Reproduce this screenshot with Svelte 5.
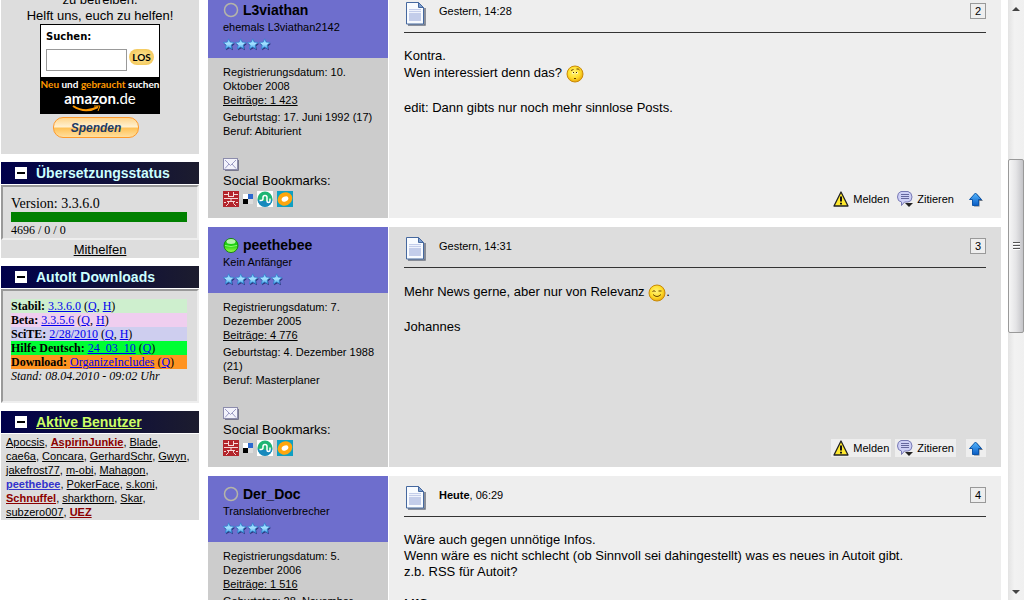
<script lang="ts">
	type User = { name: string; group?: 'admin' | 'mod' };
	type Post = {
		nr: number;
		author: string;
		online?: boolean;
		rank: string;
		stars: number;
		registered: string;
		posts: string;
		birthday: string;
		job?: string;
		day: string;
		time: string;
		today?: boolean;
	};

	const downloads = [
		{ label: 'Stabil', link: '3.3.6.0', extra: ['Q', 'H'], color: 'stable' },
		{ label: 'Beta', link: '3.3.5.6', extra: ['Q', 'H'], color: 'beta' },
		{ label: 'SciTE', link: '2/28/2010', extra: ['Q', 'H'], color: 'scite' },
		{ label: 'Hilfe Deutsch', link: '24_03_10', extra: ['Q'], color: 'german' },
		{ label: 'Download', link: 'OrganizeIncludes', extra: ['Q'], color: 'organize' }
	];

	const users: User[] = [
		{ name: 'Apocsis' },
		{ name: 'AspirinJunkie', group: 'admin' },
		{ name: 'Blade' },
		{ name: 'cae6a' },
		{ name: 'Concara' },
		{ name: 'GerhardSchr' },
		{ name: 'Gwyn' },
		{ name: 'jakefrost77' },
		{ name: 'm-obi' },
		{ name: 'Mahagon' },
		{ name: 'peethebee', group: 'mod' },
		{ name: 'PokerFace' },
		{ name: 's.koni' },
		{ name: 'Schnuffel', group: 'admin' },
		{ name: 'sharkthorn' },
		{ name: 'Skar' },
		{ name: 'subzero007' },
		{ name: 'UEZ', group: 'admin' }
	];

	const posts: Post[] = [
		{
			nr: 2,
			author: 'L3viathan',
			rank: 'ehemals L3viathan2142',
			stars: 4,
			registered: '10. Oktober 2008',
			posts: '1 423',
			birthday: '17. Juni 1992 (17)',
			job: 'Abiturient',
			day: 'Gestern',
			time: '14:28'
		},
		{
			nr: 3,
			author: 'peethebee',
			online: true,
			rank: 'Kein Anfänger',
			stars: 5,
			registered: '7. Dezember 2005',
			posts: '4 776',
			birthday: '4. Dezember 1988 (21)',
			job: 'Masterplaner',
			day: 'Gestern',
			time: '14:31'
		},
		{
			nr: 4,
			author: 'Der_Doc',
			rank: 'Translationverbrecher',
			stars: 4,
			registered: '5. Dezember 2006',
			posts: '1 516',
			birthday: '28. November 1989 (20)',
			day: 'Heute',
			time: '06:29',
			today: true
		}
	];
</script>

{#snippet boxTitle(title: string, linked = false)}
	<h2>
		<button class="collapse" aria-label="{title} einklappen"></button>
		{#if linked}<a href="#users">{title}</a>{:else}{title}{/if}
	</h2>
{/snippet}

{#snippet smiley(kind: string)}
	<svg class="smiley" width="18" height="18" viewBox="0 0 18 18" role="img" aria-label={kind}>
		<circle cx="9" cy="9" r="8" fill="url(#face)" stroke="#c98a08" />
		{#if kind === 'wink'}
			<path d="M4.500 7.500q1.500-1.500 3 0M10.500 7h3M5 10.500q4 4 8 0" fill="none" stroke="#6b4300" />
		{:else}
			<path d="M5 5.500l2.500-1M10.500 4q2-.5 3 1M8 13.500h2" fill="none" stroke="#6b4300" />
			<path d="M6 7h2v2H6zM10 7h2v2h-2z" fill="#fff6b0" />
			<path d="M7 7.500h1M10 7.500h1" stroke="#3c2800" />
		{/if}
	</svg>
{/snippet}

<!-- shared gradients for the inline icons -->
<svg class="defs" width="0" height="0" aria-hidden="true">
	<defs>
		<radialGradient id="face" cx=".45" cy=".4" r=".6">
			<stop offset="0" stop-color="#fff27a" />
			<stop offset=".6" stop-color="#ffdf2e" />
			<stop offset="1" stop-color="#eba80c" />
		</radialGradient>
		<linearGradient id="green" x1="0" y1="0" x2="0" y2="1">
			<stop offset="0" stop-color="#25c61b" />
			<stop offset=".5" stop-color="#1fd30f" />
			<stop offset="1" stop-color="#a4ff4d" />
		</linearGradient>
		<linearGradient id="blue" x1="0" y1="0" x2="0" y2="1">
			<stop offset="0" stop-color="#55b8ff" />
			<stop offset="1" stop-color="#0a5cc4" />
		</linearGradient>
		<linearGradient id="star" x1="0" y1="0" x2="0" y2="1">
			<stop offset="0" stop-color="#6cc4fa" />
			<stop offset=".5" stop-color="#a6e0ff" />
			<stop offset="1" stop-color="#3a9fe8" />
		</linearGradient>
	</defs>
</svg>

<div class="window">
	<div class="page">
		<aside>
			<section class="donate">
				<p>zu betreiben.<br />Helft uns, euch zu helfen!</p>
				<form class="amazon">
					<div class="search">
						<label for="amazon-search">Suchen:</label>
						<div class="search-row">
							<input id="amazon-search" type="text" />
							<button type="button">LOS</button>
						</div>
					</div>
					<div class="brand">
						<span class="slogan"><em>Neu</em> und <em>gebraucht</em> suchen</span>
						<span class="logo"><b>amazon</b>.de</span>
						<svg width="30" height="8" viewBox="0 0 30 8" aria-hidden="true">
							<path d="M1 1q12 8 25 1" fill="none" stroke="#f90" stroke-width="2" />
							<path d="M22 1h6l-2 5" fill="none" stroke="#f90" />
						</svg>
					</div>
				</form>
				<button class="spenden" type="button">Spenden</button>
			</section>

			<section>
				{@render boxTitle('Übersetzungsstatus')}
				<div class="box">
					<div class="frame status">
						<div class="version">Version: 3.3.6.0</div>
						<div class="bar"></div>
						<div class="count">4696 / 0 / 0</div>
					</div>
					<a class="help" href="#mithelfen">Mithelfen</a>
				</div>
			</section>

			<section>
				{@render boxTitle('AutoIt Downloads')}
				<div class="box">
					<div class="frame downloads">
						{#each downloads as item}
							<div class={item.color}>
								<b>{item.label}:</b>
								<a href="#download">{item.link}</a>
								({#each item.extra as key, i}{i ? ', ' : ''}<a href="#{key}">{key}</a>{/each})
							</div>
						{/each}
						<i>Stand: 08.04.2010 - 09:02 Uhr</i>
					</div>
				</div>
			</section>

			<section>
				{@render boxTitle('Aktive Benutzer', true)}
				<div class="box users">
					{#each users as user, i}<a href="#{user.name}" class={user.group}>{user.name}</a
						>{i < users.length - 1 ? ', ' : ''}{/each}
				</div>
			</section>
		</aside>

		<main>
			{#each posts as post}
				<article class:dark={post.nr % 2 === 1}>
					<div class="author">
						<header>
							<div class="name">
								<svg width="16" height="16" viewBox="0 0 16 16" aria-hidden="true">
									{#if post.online}
										<circle cx="8" cy="8.500" r="7" fill="url(#green)" stroke="#16860e" />
										<ellipse cx="8" cy="4.500" rx="4.500" ry="2.500" fill="#d9ffce" opacity=".8" />
										<path d="M2 8.500q6 2 12 0" fill="none" stroke="#8dff70" />
									{:else}
										<circle cx="8" cy="8" r="6.500" fill="none" stroke="#b5b5a8" stroke-width="1.500" />
									{/if}
								</svg>
								<a href="#{post.author}">{post.author}</a>
							</div>
							<div>{post.rank}</div>
							<div class="stars">
								{#each Array(post.stars) as _}
									<svg width="12" height="13" viewBox="0 0 12 13" aria-hidden="true">
										<path
											d="M6.500 2l1.500 3.300 4 .4-2.900 2.500.9 4-3.500-2-3.500 2 .9-4L1 5.700l4-.4z"
											fill="#2b3478"
										/>
										<path
											d="M5.700.8l1.500 3.300 3.900.4-2.900 2.600.8 3.900-3.300-2-3.300 2 .8-3.900L.3 4.500l3.900-.4z"
											fill="url(#star)"
											stroke="#2f80cc"
											stroke-width=".7"
										/>
									</svg>
								{/each}
							</div>
						</header>
						<div class="details">
							<div>Registrierungsdatum: {post.registered}</div>
							<a class="count-link" href="#posts">Beiträge: {post.posts}</a>
							<div>Geburtstag: {post.birthday}</div>
							{#if post.job}<div>Beruf: {post.job}</div>{/if}
							<a class="mail" href="#mail" aria-label="E-Mail">
								<svg width="16" height="14" viewBox="0 0 16 14">
									<path d="M2 13.500h13.500V3" fill="none" stroke="#77778c" />
									<rect x=".5" y="1.500" width="14" height="11" fill="#f3f3fc" stroke="#8c8cac" />
									<path d="M2 3l5.500 5.500L13 3M2 11.500L6 7M13 11.500L9 7" fill="none" stroke="#9b9bc4" />
								</svg>
							</a>
							<div class="social">Social Bookmarks:</div>
							<div class="bookmarks">
								<a href="#wong" aria-label="Mister Wong">
									<svg width="16" height="16" viewBox="0 0 16 16">
										<path d="M0 0h16v16H0z" fill="#b3242b" />
										<path
											d="M5.500 1v5M10.500 1v5M1 3.500h4M11 3.500h4M1 7.500h14M5 5.500h6M8 7v3M4 10.500h8M5.500 10v2.500L3 15M10.500 10v2.500L13 15M1 11.500h2M13 11.500h2"
											fill="none"
											stroke="#f6d9d9"
										/>
									</svg>
								</a>
								<a href="#delicious" aria-label="Delicious">
									<svg width="10" height="10" viewBox="0 0 10 10">
										<path d="M0 0h5v5H0z" fill="#fff" />
										<path d="M5 0h5v5H5z" fill="#2b69d0" />
										<path d="M0 5h5v5H0z" fill="#000" />
										<path d="M5 5h5v5H5z" fill="#ddd" />
									</svg>
								</a>
								<a href="#stumble" aria-label="StumbleUpon">
									<svg width="16" height="16" viewBox="0 0 16 16">
										<path d="M0 0h16v16H0z" fill="#fff" />
										<circle cx="8" cy="8" r="7.500" fill="#1fb573" />
										<path d="M.5 8.500a7.500 7.500 0 0 0 15 0q-7 3-15 0" fill="#1789bd" />
										<path
											d="M2.500 9.500h1.500q2 0 2-2V6.500q0-2 2-2t2 2v3.500q0 1.500 1.500 1.500t1.500-1.500V7.500"
											fill="none"
											stroke="#fff"
											stroke-width="1.500"
										/>
									</svg>
								</a>
								<a href="#oneview" aria-label="Oneview">
									<svg width="16" height="16" viewBox="0 0 16 16">
										<path d="M0 0h16v16H0z" fill="#0f9fc2" />
										<ellipse cx="8" cy="8" rx="5" ry="4" fill="#fff" transform="rotate(-18 8 8)" />
										<ellipse
											cx="8"
											cy="8"
											rx="5.500"
											ry="4.500"
											fill="none"
											stroke="#ffa60d"
											stroke-width="4"
											transform="rotate(-25 8 8)"
										/>
									</svg>
								</a>
							</div>
						</div>
					</div>

					<div class="message">
						<header>
							<svg width="20" height="24" viewBox="0 0 20 24" aria-hidden="true">
								<path d="M2 23h17V6" fill="none" stroke="#6b7280" stroke-width="1.500" />
								<path d="M.5.500h12l5 5v16.500H.5z" fill="#f8fbff" stroke="#45689f" />
								<path d="M12.500.500v5h5z" fill="#7f9fce" stroke="#45689f" />
								<path d="M3 7h12v12H3z" fill="#c3cdea" />
								<path d="M3 10.500h12M3 8.500h12" stroke="#eef2fc" />
							</svg>
							<span class="date"
								>{#if post.today}<b>{post.day}</b>{:else}{post.day}{/if}, {post.time}</span
							>
							<a class="nr" href="#post{post.nr}">{post.nr}</a>
						</header>
						<div class="text">
							{#if post.nr === 2}
								Kontra.<br />
								Wen interessiert denn das? {@render smiley('rolleyes')}<br /><br />
								edit: Dann gibts nur noch mehr sinnlose Posts.
							{:else if post.nr === 3}
								Mehr News gerne, aber nur von Relevanz {@render smiley('wink')}.<br /><br />
								Johannes
							{:else}
								Wäre auch gegen unnötige Infos.<br />
								Wenn wäre es nicht schlecht (ob Sinnvoll sei dahingestellt) was es neues in Autoit gibt.<br />
								z.b. RSS für Autoit?<br /><br />
								MfG
							{/if}
						</div>
						<div class="actions">
							<a href="#melden">
								<svg width="16" height="16" viewBox="0 0 16 16" aria-hidden="true">
									<path
										d="M8 1L15 15H1z"
										fill="#ffe92e"
										stroke="#222"
										stroke-width="1.300"
										stroke-linejoin="round"
									/>
									<path d="M8 5.500v5M8 11.700v1.800" stroke="#111" stroke-width="2" />
								</svg>
								Melden
							</a>
							<a href="#zitieren">
								<svg width="16" height="16" viewBox="0 0 16 16" aria-hidden="true">
									<path
										d="M4 .5h7q4 1 4 5.500t-4 5H7.500L4.500 14.500V11Q.5 10.500.5 6T4 .5"
										fill="#ced0f6"
										stroke="#7779b4"
									/>
									<path d="M4 3.500h8M4 5.500h8M4 7.500h8" stroke="#66689e" />
									<path d="M8 12h8l-4 4z" fill="#222" />
								</svg>
								Zitieren
							</a>
							<a class="top" href="#top" aria-label="Zum Seitenanfang">
								<svg width="14" height="15" viewBox="0 0 14 15">
									<path d="M8 2l6 7h-3.500v5.500H5" fill="#6d7785" />
									<path d="M6.500 1l6 6.500H9.500v6h-6v-6H.5z" fill="url(#blue)" stroke="#0c55a8" />
								</svg>
							</a>
						</div>
					</div>
				</article>
			{/each}
		</main>
	</div>

	<div class="scrollbar" aria-hidden="true">
		<svg viewBox="0 0 16 17"><path d="M4 11l4-4 4 4z" fill="#444" /></svg>
		<div></div>
		<div class="thumb"><span></span></div>
		<div></div>
		<svg viewBox="0 0 16 17"><path d="M4 7l4 4 4-4z" fill="#444" /></svg>
	</div>
</div>

<style>
	:global(body) {
		margin: 0;
		background: #fff;
	}

	.window {
		display: flex;
		height: 100vh;
		overflow: hidden;
		font: 13px/16px 'Liberation Sans', Arial, sans-serif;
		color: #000;
	}

	.defs {
		position: absolute;
	}

	a {
		color: inherit;
	}

	button {
		padding: 0;
		border: 0;
		font: inherit;
		cursor: pointer;
	}

	svg {
		display: block;
		flex: none;
	}

	/* the page is scrolled into the middle of the thread */
	.page {
		display: flex;
		flex: 1;
		gap: 9px;
		min-width: 0;
		margin-top: -8px;
		padding: 0 7px 0 1px;
	}

	aside {
		display: flex;
		flex: none;
		flex-direction: column;
		gap: 8px;
		width: 198px;
	}

	.donate {
		display: flex;
		flex-direction: column;
		align-items: center;
		padding-bottom: 16px;
		background: #ddd;
		text-align: center;
	}

	.donate p {
		margin: 0;
	}

	.amazon {
		width: 120px;
		box-sizing: border-box;
		border: 1px solid #000;
		background: #000;
		text-align: left;
	}

	.search {
		padding: 4px 5px 6px;
		background: #fff;
	}

	.search label {
		display: block;
		margin-bottom: 4px;
		font: bold 10px/16px 'DejaVu Sans', Verdana, sans-serif;
	}

	.search-row {
		display: flex;
		align-items: flex-start;
		gap: 2px;
	}

	.search input {
		width: 81px;
		height: 22px;
		box-sizing: border-box;
		border: 1px solid #999;
		background: #fff;
	}

	.search button {
		width: 25px;
		height: 16px;
		border-radius: 8px;
		background: radial-gradient(#ffe79a, #f0c04a);
		font: bold 10px/14px Lato, sans-serif;
	}

	.brand {
		display: flex;
		flex-direction: column;
		align-items: center;
		height: 36px;
		color: #fff;
	}

	.slogan {
		font: bold 10px/14px Lato, sans-serif;
		white-space: nowrap;
	}

	.slogan em {
		color: #f90;
		font-style: normal;
	}

	.logo {
		font: 15px/14px Lato, sans-serif;
	}

	.brand svg {
		margin-right: 26px;
	}

	.spenden {
		width: 86px;
		height: 21px;
		margin: 3px 8px 0 0;
		border: 1px solid #ff9a2b;
		border-radius: 10px;
		background: linear-gradient(#ffd58a, #fff0cf 45%, #ffc35a 55%, #ffdf9f);
		color: #1b3a66;
		font-size: 12px;
		font-style: italic;
		font-weight: bold;
	}

	h2 {
		display: flex;
		align-items: center;
		gap: 9px;
		height: 22px;
		margin: 0 0 1px;
		padding-left: 14px;
		background: linear-gradient(90deg, #00004a, #1c1c2e);
		color: #cff;
		font-size: 14px;
	}

	h2 a {
		color: #cf6;
	}

	.collapse {
		width: 12px;
		height: 12px;
		background: linear-gradient(#000, #000) center / 8px 2px no-repeat #fff;
	}

	.box {
		background: #ddd;
		text-align: center;
	}

	.frame {
		box-sizing: border-box;
		padding: 8px 10px 8px 8px;
		border: 2px solid;
		border-color: #999 #eee #eee #999;
		font-family: 'Liberation Serif', 'Times New Roman', serif;
		text-align: left;
	}

	.status {
		padding-bottom: 0;
	}

	.version {
		font-size: 14px;
		line-height: 17px;
	}

	.bar {
		height: 10px;
		background: green;
	}

	.count {
		font-size: 12px;
	}

	.help {
		display: block;
		padding-top: 2px;
	}

	.downloads {
		min-height: 114px;
		font-size: 12px;
		line-height: 14px;
		white-space: nowrap;
	}

	.downloads a {
		color: #00e;
	}

	.stable {
		background: #ceefce;
	}

	.beta {
		background: #efceef;
	}

	.scite {
		background: #ceceef;
	}

	.german {
		background: #0f3;
	}

	.organize {
		background: #ff9320;
	}

	.users {
		padding: 1px 5px;
		font-size: 11px;
		line-height: 14px;
		text-align: left;
	}

	.admin {
		color: #8b0000;
		font-weight: bold;
	}

	.mod {
		color: #33c;
		font-weight: bold;
	}

	main {
		display: flex;
		flex: 1;
		flex-direction: column;
		gap: 9px;
		min-width: 0;
	}

	article {
		display: flex;
		flex: none;
		gap: 1px;
		--post: #eee;
	}

	article.dark {
		--post: #ddd;
	}

	.author {
		flex: none;
		width: 180px;
		background: #ccc;
		font-size: 11px;
		line-height: 14px;
	}

	.author header {
		padding: 10px 15px 7px;
		background: #6e6ecd;
	}

	.name {
		display: flex;
		align-items: center;
		gap: 4px;
		margin-bottom: 2px;
	}

	.name a {
		font-size: 14px;
		font-weight: bold;
		text-decoration: none;
	}

	.stars {
		display: flex;
		padding-top: 4px;
	}

	.details {
		padding: 7px 8px 11px 15px;
	}

	.count-link {
		display: block;
		margin-bottom: 3px;
	}

	.mail {
		display: block;
		width: 16px;
		margin-top: 19px;
	}

	.social {
		margin-top: 2px;
		font-size: 13px;
		line-height: 16px;
	}

	.bookmarks {
		display: flex;
		align-items: center;
		gap: 4px;
		padding-top: 2px;
	}

	.message {
		display: flex;
		flex: 1;
		flex-direction: column;
		min-width: 0;
		padding: 10px 15px;
		background: var(--post);
	}

	.message header {
		display: flex;
		align-items: flex-start;
		padding: 0 0 6px 2px;
		border-bottom: 1px solid #333;
	}

	.date {
		flex: 1;
		margin-left: 13px;
		font-size: 11px;
		line-height: 19px;
	}

	.nr {
		box-sizing: border-box;
		width: 16px;
		height: 16px;
		margin-top: 1px;
		border: 1px solid #999;
		background: #eee;
		font-size: 11px;
		line-height: 14px;
		text-align: center;
		text-decoration: none;
	}

	.text {
		flex: 1;
		padding: 15px 0;
	}

	.smiley {
		display: inline-block;
		margin: 1px 0;
		vertical-align: middle;
	}

	.actions {
		display: flex;
		justify-content: flex-end;
		gap: 4px;
	}

	.actions a {
		display: flex;
		align-items: center;
		gap: 4px;
		height: 18px;
		padding: 0 2px;
		background: #eee;
		font-size: 11px;
		text-decoration: none;
	}

	.actions .top {
		margin-left: 6px;
		padding: 0 3px;
	}

	.scrollbar {
		display: grid;
		flex: none;
		grid-template-rows: 17px 142fr 174fr 250fr 17px;
		width: 16px;
		background: linear-gradient(90deg, #e3e3e3, #f2f2f2 40%, #f0f0f0);
	}

	.thumb {
		display: flex;
		align-items: center;
		justify-content: center;
		border: 1px solid #999;
		border-radius: 2px;
		background: linear-gradient(90deg, #f6f6f6, #e4e4e6 50%, #c4c4c8);
	}

	.thumb span {
		width: 7px;
		height: 8px;
		background: repeating-linear-gradient(#555 0 1px, #fff 1px 2px, transparent 2px 3px);
	}
</style>
